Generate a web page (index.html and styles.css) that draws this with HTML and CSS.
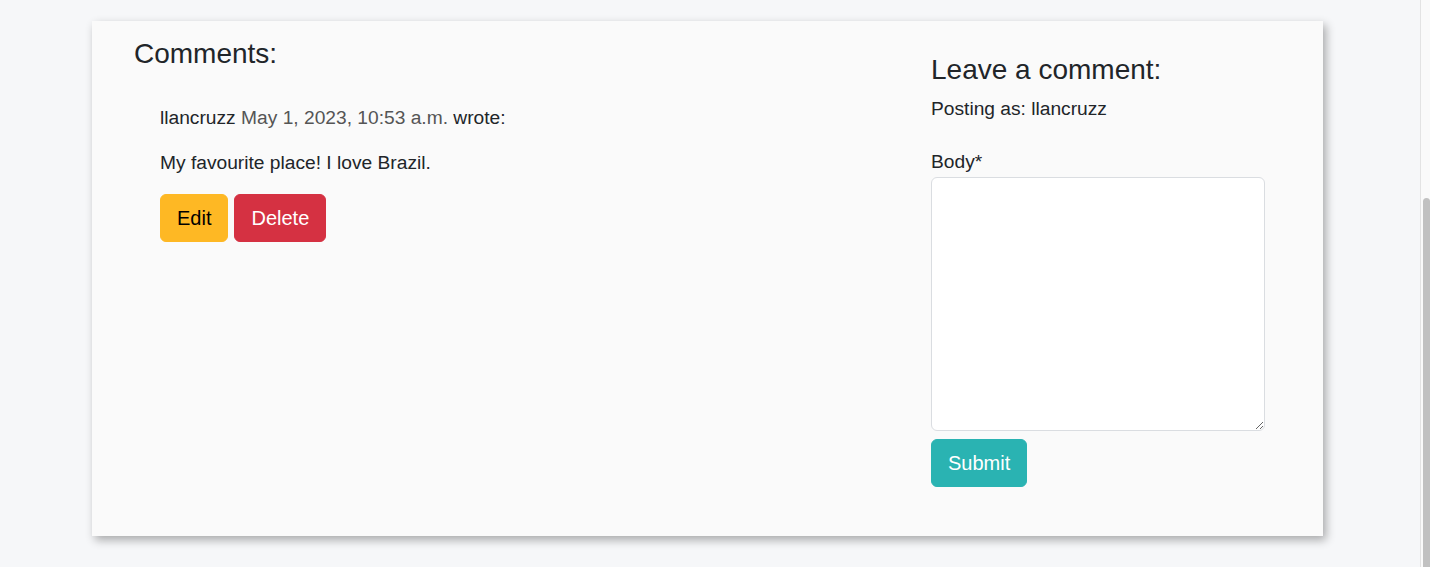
FILE: index.html
```html
<!DOCTYPE html>
<html lang="en">
<head>
<meta charset="utf-8">
<title>Comments</title>
<link rel="stylesheet" href="styles.css">
</head>
<body>
<div class="page">
  <div class="card">
    <section class="comments">
      <h3 class="heading">Comments:</h3>
      <div class="comment">
        <p class="meta">llancruzz <span class="date">May 1, 2023, 10:53 a.m.</span> wrote:</p>
        <p class="body">My favourite place! I love Brazil.</p>
        <div class="actions">
          <button class="btn btn-edit">Edit</button>
          <button class="btn btn-delete">Delete</button>
        </div>
      </div>
    </section>
    <section class="leave">
      <h3 class="heading">Leave a comment:</h3>
      <p class="posting">Posting as: llancruzz</p>
      <form class="form">
        <label class="label" for="body">Body*</label>
        <textarea id="body" class="textarea"></textarea>
        <button type="button" class="btn btn-submit">Submit</button>
      </form>
    </section>
  </div>
</div>
<div class="scrollbar"><div class="thumb"></div></div>
</body>
</html>
```
FILE: styles.css
```css
* { box-sizing: border-box; }
html, body { margin: 0; padding: 0; }
body {
  background: #f6f7f9;
  font-family: "Liberation Sans", Arial, sans-serif;
  font-size: 19.2px;
  line-height: 1.5;
  color: #212529;
  width: 1430px;
  height: 567px;
  overflow: hidden;
}
.page {
  padding-top: 21px;
  padding-left: 92px;
}
.card {
  width: 1231px;
  height: 515px;
  background: #fafafa;
  box-shadow: 3px 4px 9px rgba(0, 0, 0, 0.32);
  display: grid;
  grid-template-columns: 1fr 334px;
  padding: 0 58px 0 42px;
}
.heading {
  font-size: 28px;
  font-weight: 400;
  line-height: 1.2;
  margin: 0 0 8px;
}
.comments { padding-top: 16px; }
.comment { padding-left: 26px; padding-top: 25.7px; }
.comment p { margin: 0 0 16px; }
.date { color: #555; }
.actions { display: flex; gap: 6px; }
.btn {
  font-family: inherit;
  font-size: 20px;
  line-height: 1.5;
  padding: 8px 16px;
  border: 1px solid transparent;
  border-radius: 6px;
  cursor: pointer;
}
.btn-edit { background: #feb824; border-color: #feb824; color: #000; }
.btn-delete { background: #d53142; border-color: #d53142; color: #fff; }
.btn-submit { background: #2ab3b2; border-color: #2ab3b2; color: #fff; }
.leave { padding-top: 32px; }
.posting { margin: 0 0 24.5px; }
.form { display: flex; flex-direction: column; align-items: flex-start; }
.label { display: block; }
.textarea {
  width: 334px;
  height: 254px;
  background: #fff;
  border: 1px solid #dadde1;
  border-radius: 6px;
  margin: 0 0 8px;
  font-family: inherit;
  font-size: 19.2px;
}
.scrollbar {
  position: fixed;
  top: 0;
  right: 0;
  width: 10px;
  height: 567px;
  background: #fafafa;
  border-left: 1px solid #e3e3e3;
}
.thumb {
  position: absolute;
  top: 198px;
  left: 2px;
  right: 0;
  bottom: -20px;
  background: #c1c1c1;
  border-radius: 4px;
}
```
